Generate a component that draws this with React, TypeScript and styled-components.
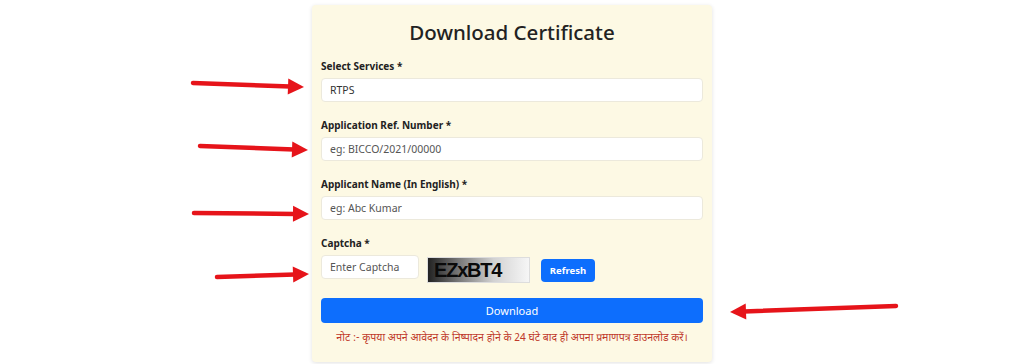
import styled, { createGlobalStyle } from "styled-components";

const GlobalStyle = createGlobalStyle`
  html, body {
    margin: 0;
    padding: 0;
    background: #ffffff;
  }
  body {
    font-family: "Noto Sans", "Open Sans", sans-serif;
    width: 1024px;
    height: 364px;
    overflow: hidden;
  }
`;

const Page = styled.div`
  position: relative;
  width: 1024px;
  height: 364px;
  display: flex;
  justify-content: center;
  padding-top: 5px;
  box-sizing: border-box;
`;

const Card = styled.div`
  width: 400px;
  height: 357px;
  box-sizing: border-box;
  padding: 13px 9px 0;
  background: #fdf9e4;
  border-radius: 4px;
  box-shadow: 0 1px 4px rgba(0, 0, 0, 0.12);
  display: flex;
  flex-direction: column;
`;

const Title = styled.h2`
  margin: 0 0 12px;
  font-size: 20.5px;
  line-height: 28px;
  font-weight: 500;
  color: #222;
  text-align: center;
`;

const Field = styled.div<{ $last?: boolean }>`
  display: flex;
  flex-direction: column;
  gap: 4px;
  margin-bottom: ${(p) => (p.$last ? "0" : "15px")};
`;

const Label = styled.label`
  font-size: 10px;
  line-height: 16px;
  font-weight: 700;
  color: #222;
`;

const Input = styled.div<{ $value?: boolean; $width?: number }>`
  height: 24px;
  box-sizing: border-box;
  width: ${(p) => (p.$width ? `${p.$width}px` : "100%")};
  background: #fff;
  border: 1px solid #ece9dc;
  border-radius: 4px;
  padding: 0 8px;
  display: flex;
  align-items: center;
  font-size: 10.5px;
  color: ${(p) => (p.$value ? "#333" : "#555")};
`;

const CaptchaRow = styled.div`
  display: flex;
  align-items: flex-start;
  height: 28px;
`;

const CaptchaImage = styled.div`
  margin: 2px 0 0 8px;
  width: 103px;
  height: 26px;
  box-sizing: border-box;
  border: 1px solid #ddd;
  background: linear-gradient(90deg, #222 0%, #777 30%, #d2d2d2 65%, #f6f6f6 100%);
  display: flex;
  align-items: center;
  padding-left: 6px;
  font-family: "Liberation Sans", Arial, sans-serif;
  font-weight: 700;
  font-size: 20px;
  letter-spacing: -1.2px;
  color: #0a0a0a;
`;

const SmallButton = styled.button`
  margin: 4px 0 0 11px;
  width: 54px;
  height: 23px;
  border: none;
  border-radius: 4px;
  background: #0d6efd;
  color: #fff;
  font-family: "Noto Sans", sans-serif;
  font-weight: 700;
  font-size: 9.5px;
  padding: 0;
`;

const WideButton = styled.button`
  margin-top: 15px;
  width: 100%;
  height: 25px;
  border: none;
  border-radius: 4px;
  background: #0d6efd;
  color: #fff;
  font-family: "Noto Sans", sans-serif;
  font-size: 11px;
  padding: 0;
`;

const Note = styled.p`
  margin: 7px 0 0;
  text-align: center;
  font-family: "Noto Sans Devanagari", "Noto Sans", "Lohit Devanagari", sans-serif;
  font-size: 10.5px;
  line-height: 18px;
  color: #c0392b;
`;

const Overlay = styled.svg`
  position: absolute;
  left: 0;
  top: 0;
  pointer-events: none;
`;

type ArrowProps = { x1: number; y1: number; x2: number; y2: number };

function Arrow({ x1, y1, x2, y2 }: ArrowProps) {
  const dx = x2 - x1;
  const dy = y2 - y1;
  const len = Math.hypot(dx, dy);
  const ux = dx / len;
  const uy = dy / len;
  const head = 16;
  const half = 8;
  const bx = x2 - ux * head;
  const by = y2 - uy * head;
  const px = -uy * half;
  const py = ux * half;
  return (
    <g>
      <line x1={x1} y1={y1} x2={bx + ux * 2} y2={by + uy * 2} stroke="#e6141a" strokeWidth={4.5} strokeLinecap="round" />
      <polygon points={`${x2},${y2} ${bx + px},${by + py} ${bx - px},${by - py}`} fill="#e6141a" />
    </g>
  );
}

const arrows: ArrowProps[] = [
  { x1: 193, y1: 83, x2: 304, y2: 87 },
  { x1: 200, y1: 146, x2: 308, y2: 150 },
  { x1: 194, y1: 213, x2: 309, y2: 214 },
  { x1: 217, y1: 277, x2: 309, y2: 274 },
  { x1: 896, y1: 306, x2: 730, y2: 312 },
];

export default function App() {
  return (
    <>
      <GlobalStyle />
      <Page>
        <Card>
          <Title>Download Certificate</Title>
          <Field>
            <Label>Select Services *</Label>
            <Input $value>RTPS</Input>
          </Field>
          <Field>
            <Label>Application Ref. Number *</Label>
            <Input>eg: BICCO/2021/00000</Input>
          </Field>
          <Field>
            <Label>Applicant Name (In English) *</Label>
            <Input>eg: Abc Kumar</Input>
          </Field>
          <Field $last>
            <Label>Captcha *</Label>
            <CaptchaRow>
              <Input $width={98}>Enter Captcha</Input>
              <CaptchaImage>EZxBT4</CaptchaImage>
              <SmallButton>Refresh</SmallButton>
            </CaptchaRow>
          </Field>
          <WideButton>Download</WideButton>
          <Note>नोट :- कृपया अपने आवेदन के निष्पादन होने के 24 घंटे बाद ही अपना प्रमाणपत्र डाउनलोड करें।</Note>
        </Card>
        <Overlay width={1024} height={364} viewBox="0 0 1024 364">
          {arrows.map((a, i) => (
            <Arrow key={i} {...a} />
          ))}
        </Overlay>
      </Page>
    </>
  );
}
